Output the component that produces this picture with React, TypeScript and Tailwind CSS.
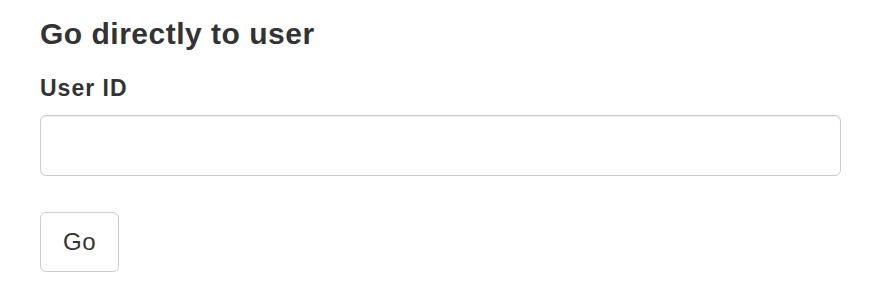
import React from "react";

export default function App() {
  return (
    <div className="w-[870px] h-[306px] bg-white text-[#333]" style={{ fontFamily: '"Liberation Sans", Arial, sans-serif' }}>
      <div className="pl-[40px] pr-[29px] pt-[15px]">
        <h3 className="text-[30px] leading-[38px] font-bold tracking-[0.5px]">Go directly to user</h3>
        <label className="block mt-[21px] text-[23px] leading-[28px] font-bold tracking-[1px]">User ID</label>
        <input type="text" className="block mt-[13px] w-full h-[61px] border border-[#ccc] rounded-[6px] px-4 text-[20px] shadow-[inset_0_1px_1px_rgba(0,0,0,0.075)] outline-none" />
        <button className="block mt-[36px] w-[79px] h-[60px] border border-[#ccc] rounded-[6px] bg-white text-[24px] tracking-[0.5px]">Go</button>
      </div>
    </div>
  );
}
